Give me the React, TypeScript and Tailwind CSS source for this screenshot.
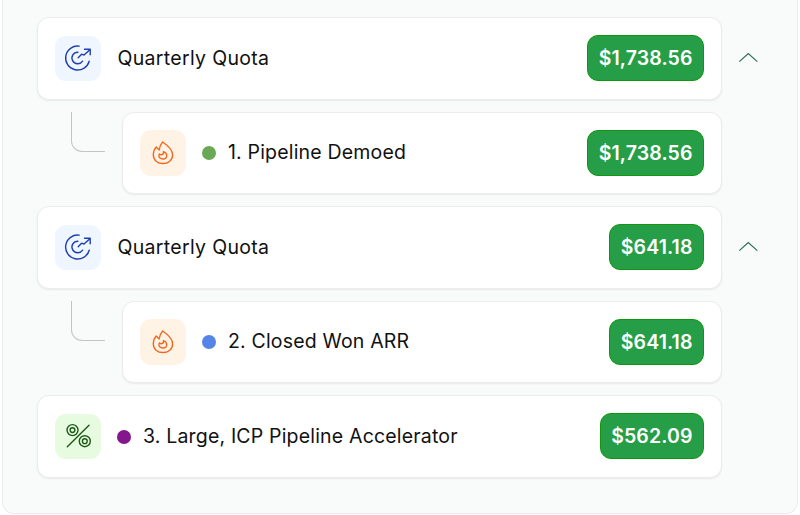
import { useState } from 'react'

interface Component {
  label: string
  amount: string
  dot: string
}

interface Quota {
  id: number
  amount: string
  child: Component
}

const quotas: Quota[] = [
  { id: 1, amount: '$1,738.56', child: { label: '1. Pipeline Demoed', amount: '$1,738.56', dot: 'bg-[#6aa856]' } },
  { id: 2, amount: '$641.18', child: { label: '2. Closed Won ARR', amount: '$641.18', dot: 'bg-[#5584e8]' } },
]

function TargetIcon() {
  return (
    <svg width="28" height="28" viewBox="0 0 28 28" fill="none" stroke="#1e40af" strokeWidth="1.4" strokeLinecap="round" strokeLinejoin="round">
      <path d="M15.2 2.1A12 12 0 1 0 25.2 17.2" />
      <path d="M13.9 8.2A5.8 5.8 0 1 0 18.6 17.2" />
      <path d="M14.2 13.8l3.4-3.6 2.4.9 5.6-5.2" />
      <path d="M20.5 5.3h5.7v5.5" />
    </svg>
  )
}

function FlameIcon() {
  return (
    <svg width="24" height="26" viewBox="0 0 24 26" fill="none" stroke="#f4651b" strokeWidth="1.35" strokeLinecap="round" strokeLinejoin="round">
      <path d="M11.6 2C15.8 4.8 21.6 9 21.6 14.9C21.6 20.1 17.3 23.5 11.9 23.5S2.3 20.1 2.3 14.8C2.3 11.8 3.4 9 5.3 7L8.1 10.1C8.6 7.2 9.6 4.2 11.6 2Z" />
      <path d="M12.4 11.6c2.1.6 3.3 2.1 3.3 3.8 0 2.1-1.7 3.6-3.9 3.6s-3.9-1.3-3.9-3.3c0-.7.2-1.3.6-1.8.7.7 1.6 1 2.4.8 1.2-.3 1.8-1.6 1.5-3.1z" />
    </svg>
  )
}

function PercentIcon() {
  return (
    <svg width="26" height="26" viewBox="0 0 26 26" fill="none" stroke="#1c5a16" strokeWidth="1.4" strokeLinecap="round">
      <path d="M2.3 23.8L24 2.2" />
      <circle cx="7.5" cy="7.1" r="5.5" />
      <circle cx="7.5" cy="7.1" r="2.4" />
      <circle cx="19.8" cy="18.2" r="5.5" />
      <circle cx="19.8" cy="18.2" r="2.4" />
    </svg>
  )
}

function Amount({ value }: { value: string }) {
  return (
    <span className="ml-auto flex h-[46px] items-center rounded-[11px] border border-[#12950f] bg-[#269e47] px-[10.5px] pt-px text-[19.5px] font-semibold tracking-[0.1px] text-white">
      {value}
    </span>
  )
}

const card = 'flex h-[82.5px] items-center rounded-xl border border-[#ececec] bg-white px-[17px] shadow-[0_1px_2px_rgba(0,0,0,0.07)]'
const tile = 'flex size-[45.5px] shrink-0 items-center justify-center rounded-[11px]'

function QuotaGroup({ quota }: { quota: Quota }) {
  const [open, setOpen] = useState(true)

  return (
    <>
      <div className="flex items-center">
        <div className={`${card} w-[685px]`}>
          <div className={`${tile} bg-[#eff6ff]`}>
            <TargetIcon />
          </div>
          <span className="ml-[17px] text-[19.5px] tracking-[0.32px] text-[#111]">Quarterly Quota</span>
          <Amount value={quota.amount} />
        </div>
        <button onClick={() => setOpen(!open)} className="ml-4" aria-label="Toggle">
          <svg width="20" height="12" viewBox="0 0 20 12" fill="none" stroke="#2b6f5b" strokeWidth="1.2" className={open ? '' : 'rotate-180'}>
            <path d="M1.3 9.6L10.3 1.6L19.3 9.6" />
          </svg>
        </button>
      </div>

      {open && (
        <div className="flex">
          <div className="ml-[34px] mr-[17px] h-10 w-[34px] rounded-bl-[11px] border-b border-l border-[#c4c4c4]" />
          <div className={`${card} w-[600px]`}>
            <div className={`${tile} bg-[#fff3e6]`}>
              <FlameIcon />
            </div>
            <span className={`ml-[16.5px] mt-px size-[14px] rounded-full ${quota.child.dot}`} />
            <span className="ml-3 text-[19.5px] tracking-[0.18px] text-[#111]">{quota.child.label}</span>
            <Amount value={quota.child.amount} />
          </div>
        </div>
      )}
    </>
  )
}

export default function App() {
  return (
    <div className="h-[515px] w-[800px] overflow-hidden bg-white px-0.5 font-['Inter',sans-serif]">
      <div className="flex h-[513.5px] flex-col gap-3 rounded-b-xl border border-t-0 border-[#e9eceb] bg-[#f9fbfa] pl-[34px] pt-[17px]">
        {quotas.map((quota) => (
          <QuotaGroup key={quota.id} quota={quota} />
        ))}

        <div className={`${card} w-[685px]`}>
          <div className={`${tile} bg-[#e7fbe1]`}>
            <PercentIcon />
          </div>
          <span className="ml-[16.5px] mt-px size-[14px] rounded-full bg-[#83178b]" />
          <span className="ml-3 text-[19.5px] tracking-[0.18px] text-[#111]">3. Large, ICP Pipeline Accelerator</span>
          <Amount value="$562.09" />
        </div>
      </div>
    </div>
  )
}
